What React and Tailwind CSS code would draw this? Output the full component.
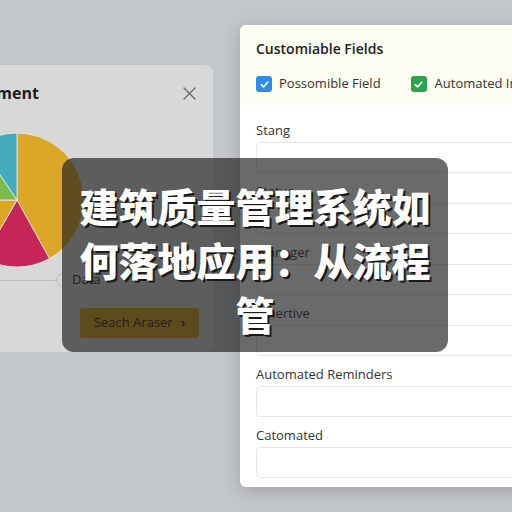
import React from "react";

const sans = { fontFamily: "'Open Sans', Lato, 'Noto Sans', sans-serif" };
const cjk = { fontFamily: "'Noto Sans CJK SC', 'Noto Sans', sans-serif" };

function Pie() {
  const c = 67;
  const pt = (deg) => {
    const a = (deg * Math.PI) / 180;
    return [c + c * Math.sin(a), c - c * Math.cos(a)];
  };
  const slice = (from, to) => {
    const [x1, y1] = pt(from);
    const [x2, y2] = pt(to);
    const large = to - from > 180 ? 1 : 0;
    return `M${c} ${c} L${x1} ${y1} A${c} ${c} 0 ${large} 1 ${x2} ${y2} Z`;
  };
  const parts = [
    [0, 151, "#dca626"],
    [151, 210, "#c7245a"],
    [210, 270, "#dca626"],
    [270, 326, "#7cbb4b"],
    [326, 360, "#43acbd"],
  ];
  return (
    <svg width="134" height="134" viewBox="0 0 134 134">
      {parts.map(([a, b, col], i) => (
        <path key={i} d={slice(a, b)} fill={col} stroke="#f3eede" strokeWidth="0.8" />
      ))}
    </svg>
  );
}

function Check({ color }) {
  return (
    <span className={`flex h-4 w-4 shrink-0 items-center justify-center rounded-[3px] ${color}`}>
      <svg width="11" height="11" viewBox="0 0 12 12" fill="none">
        <path d="M2.5 6.2 L5 8.6 L9.6 3.4" stroke="white" strokeWidth="1.8" strokeLinecap="round" strokeLinejoin="round" />
      </svg>
    </span>
  );
}

function Field({ label }) {
  return (
    <div className="flex flex-col">
      <div className="h-4 whitespace-nowrap text-[13px] leading-4 text-[#333]">{label}</div>
      <div className="mt-1 h-[31px] w-[290px] rounded-[4px] border border-[#e6e6e6] bg-white" />
    </div>
  );
}

export default function App() {
  return (
    <div className="relative h-[512px] w-[512px] overflow-hidden bg-[#c3c6ca]" style={sans}>
      {/* left window: chart panel */}
      <div className="absolute left-[-150px] top-[65px] flex h-[287px] w-[363px] flex-col rounded-lg bg-[#d8d8d8]">
        <div className="flex items-center justify-between pl-[20px] pr-[17px] pt-[18px]">
          <span className="whitespace-nowrap text-[16px] font-bold leading-5 text-[#1c1c1c]">Quality Management</span>
          <svg width="13" height="13" viewBox="0 0 13 13" stroke="#666" strokeWidth="1.3" strokeLinecap="round">
            <path d="M1 1 L12 12 M12 1 L1 12" />
          </svg>
        </div>
        <div className="ml-[100px] mt-[30px]">
          <Pie />
        </div>
        <div className="mt-[5px] flex h-4 items-center">
          <div className="h-px w-[205px] bg-[#bdbdbd]" />
          <div className="ml-[1px] h-[14px] w-[14px] rounded-full border border-[#bdbdbd] bg-[#d8d8d8]" />
          <span className="ml-[2px] text-[13px] text-[#222]">Data</span>
        </div>
        <div className="ml-[230px] mt-[20px] flex h-[30px] w-[119px] items-center justify-center gap-2 rounded-[3px] bg-[#d6a012] text-[13px] text-[#1e1e1e]">
          <span className="whitespace-nowrap">Seach Araser</span>
          <span className="text-[12px] font-bold">›</span>
        </div>
      </div>

      {/* right window: form */}
      <div className="absolute left-[240px] top-[25px] h-[462px] w-[300px] overflow-hidden rounded-md bg-white shadow-[0_4px_18px_rgba(0,0,0,0.18)]">
        <div className="bg-[#fdfdf2] px-4 pb-[13px] pt-[14px]">
          <div className="whitespace-nowrap text-[14px] font-semibold leading-5 text-[#222]">Customiable Fields</div>
          <div className="mt-[17px] flex h-4 items-center whitespace-nowrap text-[13px] text-[#333]">
            <Check color="bg-[#2f8be6]" />
            <span className="ml-[7px]">Possomible Field</span>
            <span className="ml-[30px]"><Check color="bg-[#2aa44f]" /></span>
            <span className="ml-[8px]">Automated Inputs</span>
          </div>
        </div>
        <div className="flex flex-col gap-[10px] px-4 pt-[17px]">
          <Field label="Stang" />
          <Field label="Status" />
          <Field label="Manager" />
          <Field label="Innertive" />
          <Field label="Automated Reminders" />
          <Field label="Catomated" />
        </div>
      </div>

      {/* caption overlay */}
      <div className="absolute left-[62px] top-[158px] flex h-[194px] w-[386px] flex-col items-center rounded-[12px] bg-[rgba(33,33,33,0.67)] pt-[20px]" style={cjk}>
        {["建筑质量管理系统如", "何落地应用：从流程", "管"].map((line) => (
          <div
            key={line}
            className="whitespace-nowrap text-center text-[39px] font-black leading-[54px] text-white [text-shadow:2px_2px_0_#1a1a1a]"
          >
            {line}
          </div>
        ))}
      </div>
    </div>
  );
}
